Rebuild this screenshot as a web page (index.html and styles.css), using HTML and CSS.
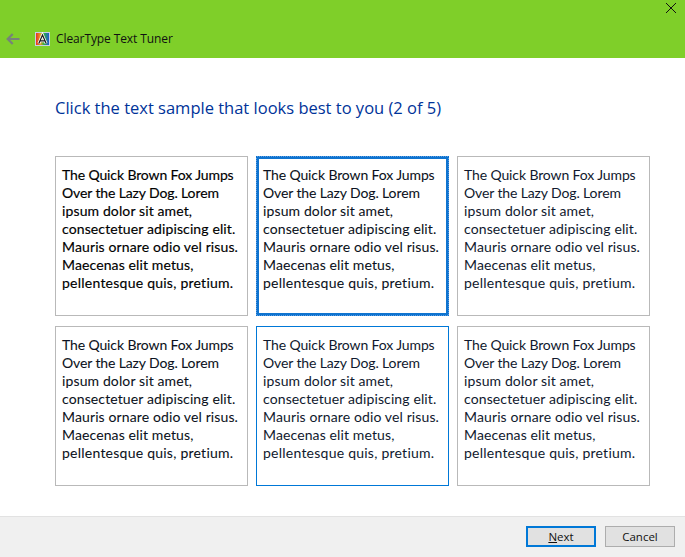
FILE: index.html
```html
<!DOCTYPE html>
<html lang="en">
<head>
<meta charset="utf-8">
<title>ClearType Text Tuner</title>
<link rel="stylesheet" href="styles.css">
</head>
<body>
<div class="window">
  <header class="header">
    <div class="close-row">
      <svg class="close" width="10" height="10" viewBox="0 0 10 10"><path d="M0 0l10 10M10 0L0 10" stroke="#111" stroke-width="1" fill="none"/></svg>
    </div>
    <div class="title-row">
      <svg class="back" width="14" height="12" viewBox="0 0 14 12"><path d="M13.500 6H2M6.700 1L1.700 6l5 5" stroke="#77827a" stroke-width="2.200" fill="none"/></svg>
      <svg class="app-icon" width="15" height="14" viewBox="0 0 15 14">
        <defs><linearGradient id="rb" x1="0" x2="1" y1="0" y2="0"><stop offset="0" stop-color="#e8242a"/><stop offset=".35" stop-color="#e8a020"/><stop offset=".6" stop-color="#30b040"/><stop offset="1" stop-color="#2050e0"/></linearGradient></defs>
        <rect x=".5" y=".5" width="14" height="13" fill="url(#rb)" stroke="#c8d0e8"/>
        <path d="M3.800 11.500L7.500 3 11.200 11.500M5.200 8.800h4.600" stroke="#fff" stroke-width="2.800" fill="none"/>
        <path d="M3.800 11.500L7.500 3 11.200 11.500M5.200 8.800h4.600" stroke="#1a1a1a" stroke-width="1.200" fill="none"/>
      </svg>
      <span class="app-name">ClearType Text Tuner</span>
    </div>
  </header>
  <main class="content">
    <h1 class="heading">Click the text sample that looks best to you (2 of 5)</h1>
    <div class="grid">
      <div class="card bold"><span class="tight">The Quick Brown Fox Jumps<br>Over the Lazy Dog. Lorem</span><br>ipsum dolor sit amet,<br>consectetuer adipiscing elit.<br>Mauris ornare odio vel risus.<br>Maecenas elit metus,<br><span class="wide">pellentesque quis, pretium.</span></div>
      <div class="card medium focused"><span class="tight">The Quick Brown Fox Jumps<br>Over the Lazy Dog. Lorem</span><br>ipsum dolor sit amet,<br>consectetuer adipiscing elit.<br>Mauris ornare odio vel risus.<br>Maecenas elit metus,<br><span class="wide">pellentesque quis, pretium.</span></div>
      <div class="card"><span class="tight">The Quick Brown Fox Jumps<br>Over the Lazy Dog. Lorem</span><br>ipsum dolor sit amet,<br>consectetuer adipiscing elit.<br>Mauris ornare odio vel risus.<br>Maecenas elit metus,<br><span class="wide">pellentesque quis, pretium.</span></div>
      <div class="card medium"><span class="tight">The Quick Brown Fox Jumps<br>Over the Lazy Dog. Lorem</span><br>ipsum dolor sit amet,<br>consectetuer adipiscing elit.<br>Mauris ornare odio vel risus.<br>Maecenas elit metus,<br><span class="wide">pellentesque quis, pretium.</span></div>
      <div class="card selected"><span class="tight">The Quick Brown Fox Jumps<br>Over the Lazy Dog. Lorem</span><br>ipsum dolor sit amet,<br>consectetuer adipiscing elit.<br>Mauris ornare odio vel risus.<br>Maecenas elit metus,<br><span class="wide">pellentesque quis, pretium.</span></div>
      <div class="card"><span class="tight">The Quick Brown Fox Jumps<br>Over the Lazy Dog. Lorem</span><br>ipsum dolor sit amet,<br>consectetuer adipiscing elit.<br>Mauris ornare odio vel risus.<br>Maecenas elit metus,<br><span class="wide">pellentesque quis, pretium.</span></div>
    </div>
  </main>
  <footer class="footer">
    <button class="btn btn-default" type="button"><u>N</u>ext</button>
    <button class="btn" type="button">Cancel</button>
  </footer>
</div>
</body>
</html>
```
FILE: styles.css
```css
* { box-sizing: border-box; }
html, body { margin: 0; padding: 0; }
body { width: 685px; height: 557px; overflow: hidden; background: #fff; font-family: "Open Sans", "Noto Sans", sans-serif; }
.window { display: flex; flex-direction: column; width: 685px; height: 557px; }
.header { height: 58px; background: #7fcf29; display: flex; flex-direction: column; flex: none; }
.close-row { display: flex; justify-content: flex-end; padding: 3px 9px 0 0; height: 31px; }
.close { display: block; }
.title-row { display: flex; align-items: center; height: 16px; padding-left: 6px; }
.back { margin-right: 15px; }
.app-icon { margin-right: 6px; }
.app-name { font-size: 12px; color: #111; line-height: 16px; letter-spacing: -.1px; }
.content { flex: 1; padding: 38px 0 0 55px; }
.heading { margin: 0; font-size: 16.500px; line-height: 24px; font-weight: 400; color: #003399; }
.grid { display: grid; grid-template-columns: repeat(3, 193px); grid-auto-rows: 160px; column-gap: 8px; row-gap: 10px; margin-top: 36px; }
.card { border: 1px solid #b9b9b9; padding: 9px 0 0 6px; font-family: Lato, sans-serif; font-size: 14px; line-height: 18px; letter-spacing: .12px; color: #10192e; white-space: nowrap; }
.tight { letter-spacing: -.12px; }
.wide { letter-spacing: .24px; }
.bold { color: #000; -webkit-text-stroke: .16px #000; }
.medium { color: #0b1120; -webkit-text-stroke: .06px #0b1120; }
.focused { border: 1px dotted #0a6fd0; background: linear-gradient(#fff, #fff) padding-box, linear-gradient(#5c9fe0, #5c9fe0) border-box; box-shadow: inset 0 0 0 2px #0f74d0; }
.selected { border-color: #0078d7; }
.footer { height: 41px; flex: none; background: #f0f0f0; border-top: 1px solid #e2e2e2; display: flex; justify-content: flex-end; gap: 9px; padding: 9px 10px 0 0; }
.btn { width: 70px; height: 21px; padding: 0; border: 1px solid #adadad; background: #e1e1e1; font-family: "Open Sans", sans-serif; font-size: 11.500px; line-height: 17px; color: #111; }
.btn-default { border: 2px solid #0078d7; }
```
